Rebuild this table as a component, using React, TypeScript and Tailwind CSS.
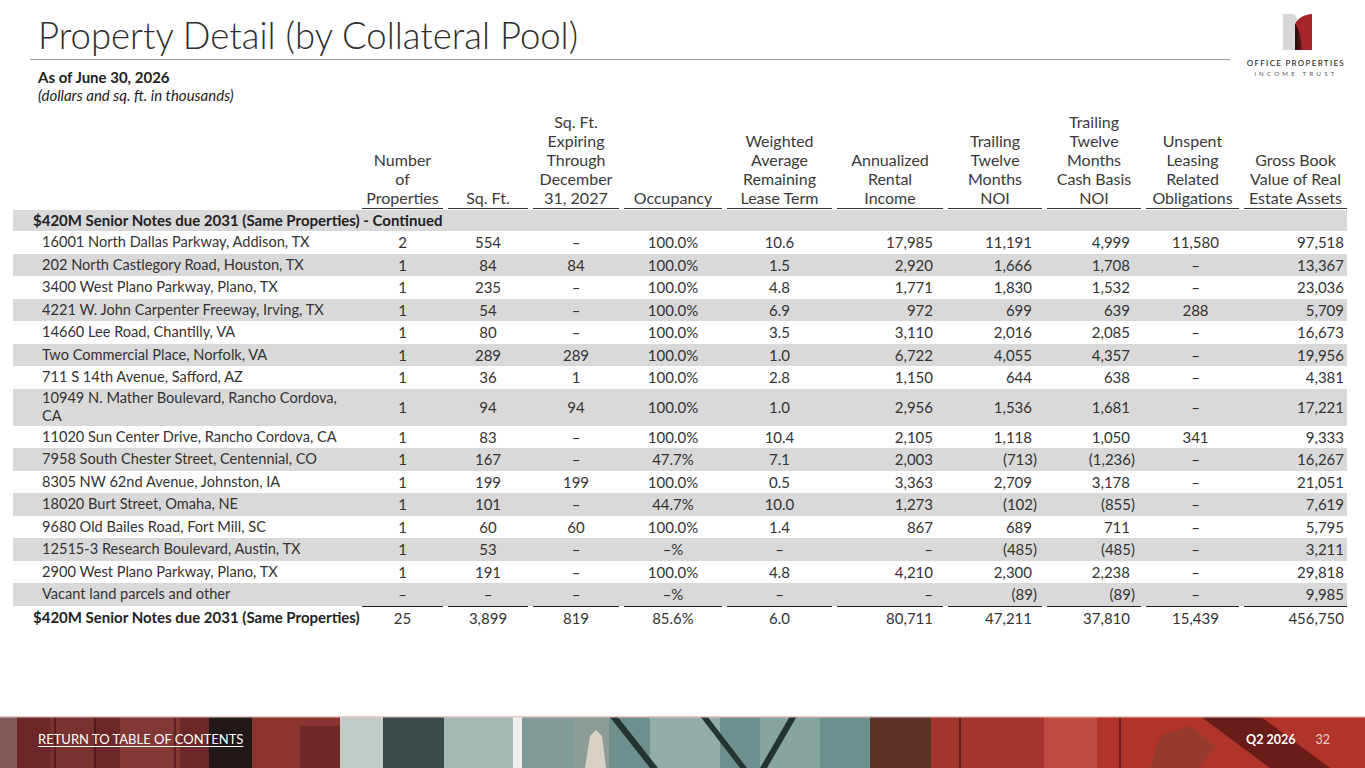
import React from "react";

type Row = string[];

const rows: Row[] = [
  ["16001 North Dallas Parkway, Addison, TX", "2", "554", "–", "100.0%", "10.6", "17,985", "11,191", "4,999", "11,580", "97,518"],
  ["202 North Castlegory Road, Houston, TX", "1", "84", "84", "100.0%", "1.5", "2,920", "1,666", "1,708", "–", "13,367"],
  ["3400 West Plano Parkway, Plano, TX", "1", "235", "–", "100.0%", "4.8", "1,771", "1,830", "1,532", "–", "23,036"],
  ["4221 W. John Carpenter Freeway, Irving, TX", "1", "54", "–", "100.0%", "6.9", "972", "699", "639", "288", "5,709"],
  ["14660 Lee Road, Chantilly, VA", "1", "80", "–", "100.0%", "3.5", "3,110", "2,016", "2,085", "–", "16,673"],
  ["Two Commercial Place, Norfolk, VA", "1", "289", "289", "100.0%", "1.0", "6,722", "4,055", "4,357", "–", "19,956"],
  ["711 S 14th Avenue, Safford, AZ", "1", "36", "1", "100.0%", "2.8", "1,150", "644", "638", "–", "4,381"],
  ["10949 N. Mather Boulevard, Rancho Cordova,|CA", "1", "94", "94", "100.0%", "1.0", "2,956", "1,536", "1,681", "–", "17,221"],
  ["11020 Sun Center Drive, Rancho Cordova, CA", "1", "83", "–", "100.0%", "10.4", "2,105", "1,118", "1,050", "341", "9,333"],
  ["7958 South Chester Street, Centennial, CO", "1", "167", "–", "47.7%", "7.1", "2,003", "(713)", "(1,236)", "–", "16,267"],
  ["8305 NW 62nd Avenue, Johnston, IA", "1", "199", "199", "100.0%", "0.5", "3,363", "2,709", "3,178", "–", "21,051"],
  ["18020 Burt Street, Omaha, NE", "1", "101", "–", "44.7%", "10.0", "1,273", "(102)", "(855)", "–", "7,619"],
  ["9680 Old Bailes Road, Fort Mill, SC", "1", "60", "60", "100.0%", "1.4", "867", "689", "711", "–", "5,795"],
  ["12515-3 Research Boulevard, Austin, TX", "1", "53", "–", "–%", "–", "–", "(485)", "(485)", "–", "3,211"],
  ["2900 West Plano Parkway, Plano, TX", "1", "191", "–", "100.0%", "4.8", "4,210", "2,300", "2,238", "–", "29,818"],
  ["Vacant land parcels and other", "–", "–", "–", "–%", "–", "–", "(89)", "(89)", "–", "9,985"],
];

const total: Row = ["$420M Senior Notes due 2031 (Same Properties)", "25", "3,899", "819", "85.6%", "6.0", "80,711", "47,211", "37,810", "15,439", "456,750"];

const headers: string[][] = [
  [],
  ["Number", "of", "Properties"],
  ["Sq. Ft."],
  ["Sq. Ft.", "Expiring", "Through", "December", "31, 2027"],
  ["Occupancy"],
  ["Weighted", "Average", "Remaining", "Lease Term"],
  ["Annualized", "Rental", "Income"],
  ["Trailing", "Twelve", "Months", "NOI"],
  ["Trailing", "Twelve", "Months", "Cash Basis", "NOI"],
  ["Unspent", "Leasing", "Related", "Obligations"],
  ["Gross Book", "Value of Real", "Estate Assets"],
];

const grid = "grid grid-cols-[344px_81px_80px_86px_98px_105px_106px_94px_94px_93px_103px] gap-x-[5px]";

// how each numeric column lines up
const align: Record<number, string> = {
  1: "justify-center",
  2: "justify-center",
  3: "justify-center",
  4: "justify-center",
  5: "justify-center",
  6: "justify-end pr-[10px]",
  7: "justify-end pr-[10px]",
  8: "justify-end pr-[11px]",
  9: "justify-center pl-[6px]",
  10: "justify-end pr-[3px]",
};

const Value = ({ v }: { v: string }) =>
  v.startsWith("(") ? <span className="-mr-[5px]">{v}</span> : <span>{v}</span>;

const Logo = () => (
  <div className="flex flex-col items-center pt-[14px]">
    <svg width="29" height="36" viewBox="0 0 29 36" className="ml-[4px]">
      <path d="M0 0 H9 C12.5 0 14.5 3 14.5 8 V36 H0 Z" fill="#d7d7d7" />
      <path d="M12 10 C15 4 21 0.5 29 0 V36 H12 Z" fill="#a6252b" />
      <path d="M12 10 C15.5 14 18 21 18.5 36 H12 Z" fill="#4b1518" />
      <path d="M12 10 C13.5 12 14.5 14 14.5 16 V36 H12 Z" fill="#2e0d0f" />
    </svg>
    <div className="mt-[9px] text-[8px] font-semibold leading-none tracking-[0.16em] whitespace-nowrap text-[#333]">
      OFFICE PROPERTIES
    </div>
    <div className="mt-[4px] text-[6px] leading-none tracking-[0.55em] whitespace-nowrap text-[#555]">
      INCOME TRUST
    </div>
  </div>
);

const FooterPhoto = () => (
  <svg className="absolute inset-0" width="1365" height="52" viewBox="0 0 1365 52" preserveAspectRatio="none">
    <rect x="0" y="0" width="1365" height="52" fill="#a8352d" />
    <rect x="0" y="0" width="17" height="52" fill="#7e5a58" />
    <rect x="17" y="0" width="192" height="52" fill="#6c2828" />
    <rect x="50" y="0" width="45" height="52" fill="#7a3230" />
    <rect x="120" y="0" width="60" height="52" fill="#843835" />
    <rect x="209" y="0" width="43" height="52" fill="#221818" />
    <rect x="252" y="0" width="88" height="52" fill="#8b3431" />
    <rect x="300" y="10" width="40" height="42" fill="#6f2826" />
    <rect x="340" y="0" width="43" height="52" fill="#c3ccc9" />
    <rect x="383" y="0" width="61" height="52" fill="#3a4a48" />
    <rect x="444" y="0" width="69" height="52" fill="#a3b8b3" />
    <rect x="513" y="0" width="9" height="52" fill="#f0f0ee" />
    <rect x="522" y="0" width="52" height="52" fill="#7f9a97" />
    <rect x="574" y="0" width="35" height="52" fill="#8e9c98" />
    <path d="M585 52 L590 20 L596 14 L602 20 L606 52 Z" fill="#d8d2c4" />
    <rect x="609" y="0" width="261" height="52" fill="#6f8f8c" />
    <rect x="650" y="0" width="70" height="52" fill="#93aea9" />
    <rect x="760" y="0" width="60" height="52" fill="#86a4a0" />
    <path d="M609 0 L650 52 L658 52 L617 0 Z" fill="#243432" />
    <path d="M700 0 L740 52 L747 52 L707 0 Z" fill="#243432" />
    <path d="M790 0 L760 52 L767 52 L797 0 Z" fill="#243432" />
    <rect x="870" y="0" width="61" height="52" fill="#5a3324" />
    <rect x="931" y="0" width="113" height="52" fill="#a3372f" />
    <rect x="1044" y="0" width="53" height="52" fill="#bd4c44" />
    <rect x="1097" y="0" width="268" height="52" fill="#b0342a" />
    <path d="M1200 0 L1260 0 L1330 52 L1270 52 Z" fill="#6a1d18" />
    <path d="M1160 20 L1190 10 L1215 30 L1200 52 L1150 52 Z" fill="#8b3d2f" opacity="0.7" />
    <g stroke="#3a1515" strokeWidth="2" opacity="0.6">
      <line x1="55" y1="0" x2="55" y2="52" />
      <line x1="95" y1="0" x2="95" y2="52" />
      <line x1="175" y1="0" x2="175" y2="52" />
      <line x1="960" y1="0" x2="960" y2="52" />
      <line x1="1120" y1="0" x2="1120" y2="52" />
    </g>
    <rect x="0" y="0" width="1365" height="1.5" fill="#e8c9c6" />
  </svg>
);

export default function App() {
  return (
    <div className="relative flex h-[768px] w-[1365px] flex-col overflow-hidden bg-white font-['Lato',sans-serif] text-[#333]">
      <div className="flex">
        <div className="ml-[30px] w-[1200px]">
          <div className="border-b border-[#9a9a9a] pb-[3px] pl-[8px] pt-[14px]">
            <h1 className="text-[36.5px] font-light leading-[42px] text-[#2e2e2e]">Property Detail (by Collateral Pool)</h1>
          </div>
          <div className="pl-[8px] pt-[8px] text-[15px] leading-[18px] text-[#222]">
            <div className="font-bold">As of June 30, 2026</div>
            <div className="italic">(dollars and sq. ft. in thousands)</div>
          </div>
        </div>
        <div className="ml-auto mr-[20px]">
          <Logo />
        </div>
      </div>

      <div className="ml-[13px] mt-[8px] w-[1334px] text-[15px] text-[#333]">
        <div className={`${grid} text-[16px] leading-[19px] text-[#3a3a3a]`}>
          {headers.map((h, i) => (
            <div
              key={i}
              className={`flex flex-col items-center justify-end pb-[1px] text-center ${i > 0 ? "border-b border-[#333]" : ""}`}
            >
              {h.map((line) => (
                <div key={line} className="whitespace-nowrap">{line}</div>
              ))}
            </div>
          ))}
        </div>

        <div className="mt-[1px] flex h-[21px] items-center bg-[#d9d9d9] pl-[20px] font-bold whitespace-nowrap text-[#222]">
          $420M Senior Notes due 2031 (Same Properties) - Continued
        </div>

        {rows.map((r, ri) => {
          const twoLine = r[0].includes("|");
          return (
            <div
              key={ri}
              className={`${grid} ${twoLine ? "h-[37px]" : "h-[22.5px]"} ${ri % 2 === 1 ? "bg-[#d9d9d9]" : ""}`}
            >
              {r.map((v, ci) =>
                ci === 0 ? (
                  <div key={ci} className="flex flex-col justify-center pl-[29px] text-[14.6px] leading-[18px]">
                    {v.split("|").map((part) => (
                      <div key={part} className="whitespace-nowrap">{part}</div>
                    ))}
                  </div>
                ) : (
                  <div key={ci} className={`flex items-center ${align[ci]}`}>
                    <Value v={v} />
                  </div>
                )
              )}
            </div>
          );
        })}

        <div className={`${grid} h-[22.5px]`}>
          {total.map((v, ci) =>
            ci === 0 ? (
              <div key={ci} className="flex items-center pl-[20px] font-bold whitespace-nowrap text-[#222]">{v}</div>
            ) : (
              <div key={ci} className={`flex items-center border-t border-[#222] ${align[ci]}`}>
                <Value v={v} />
              </div>
            )
          )}
        </div>
      </div>

      <div className="relative mt-auto h-[52px] w-full">
        <FooterPhoto />
        <div className="relative flex h-full items-center pb-[4px] pl-[38px] pr-[35px] text-white">
          <a href="#" className="text-[13px] underline underline-offset-2">RETURN TO TABLE OF CONTENTS</a>
          <div className="ml-auto flex items-center gap-[20px] text-[12.5px]">
            <span className="font-bold">Q2 2026</span>
            <span className="text-[#f0d0cc]">32</span>
          </div>
        </div>
      </div>
    </div>
  );
}
